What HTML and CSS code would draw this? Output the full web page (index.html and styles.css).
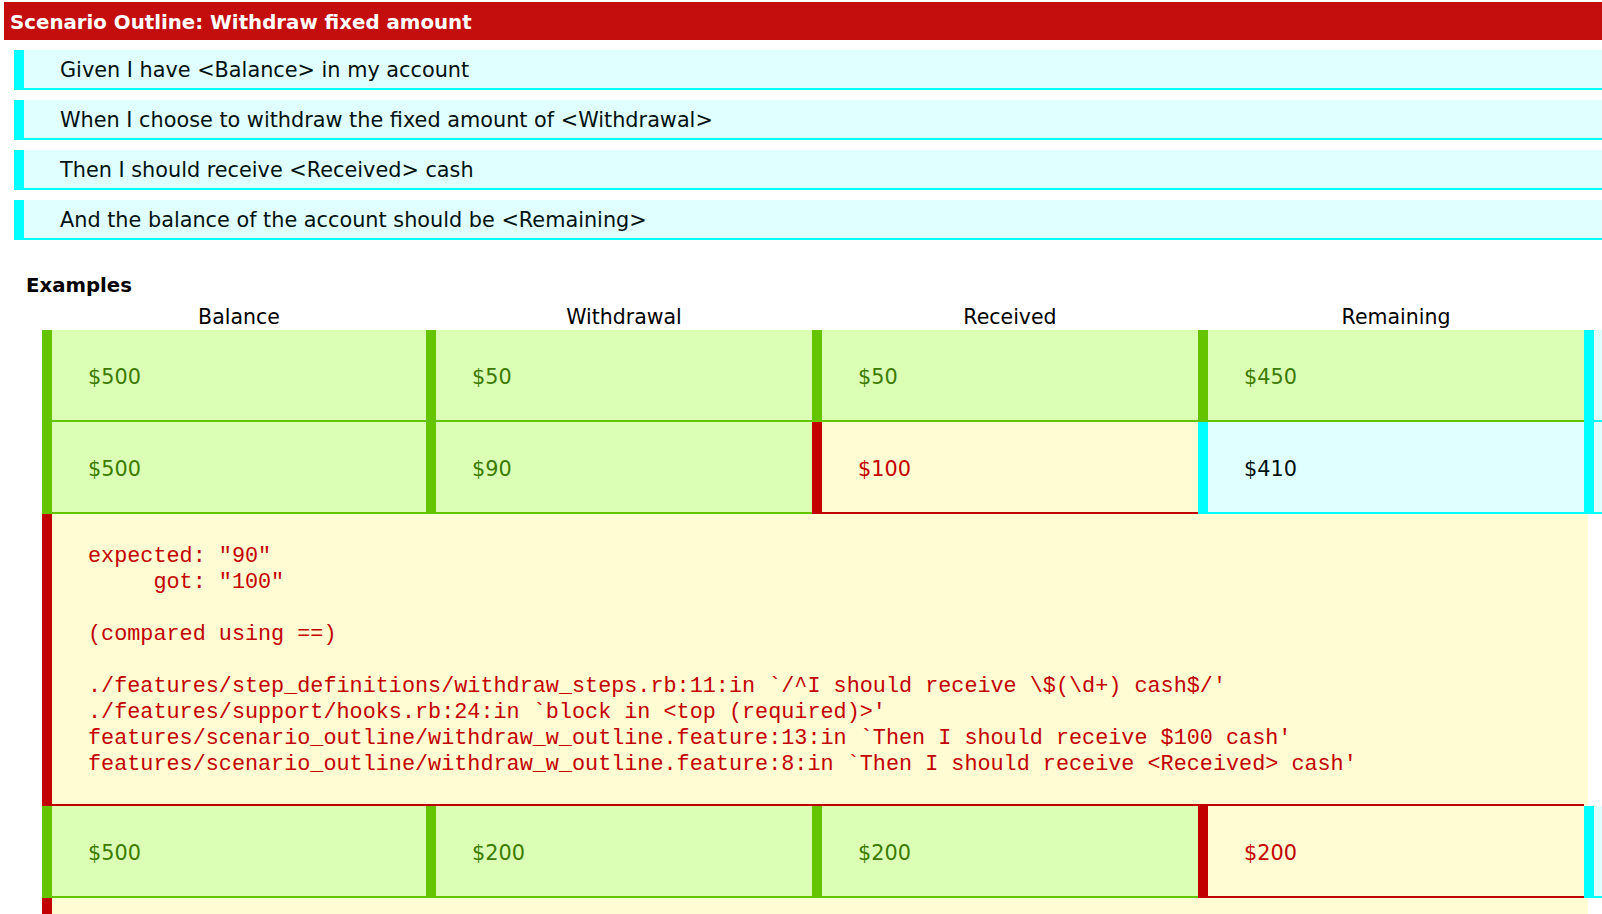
FILE: index.html
```html
<!DOCTYPE html>
<html>
<head>
<meta charset="utf-8">
<title>Scenario Outline: Withdraw fixed amount</title>
<link rel="stylesheet" href="styles.css">
</head>
<body>
<div class="scenario">
  <h3 class="scenario-title">Scenario Outline: Withdraw fixed amount</h3>
  <ol class="steps">
    <li class="step skipped">Given I have &lt;Balance&gt; in my account</li>
    <li class="step skipped">When I choose to withdraw the fixed amount of &lt;Withdrawal&gt;</li>
    <li class="step skipped">Then I should receive &lt;Received&gt; cash</li>
    <li class="step skipped">And the balance of the account should be &lt;Remaining&gt;</li>
  </ol>
  <div class="examples">
    <h4 class="examples-title">Examples</h4>
    <div class="table">
      <div class="th">Balance</div>
      <div class="th">Withdrawal</div>
      <div class="th">Received</div>
      <div class="th">Remaining</div>
      <div class="th"></div>

      <div class="cell passed">$500</div>
      <div class="cell passed">$50</div>
      <div class="cell passed">$50</div>
      <div class="cell passed">$450</div>
      <div class="cell skipped"></div>

      <div class="cell passed">$500</div>
      <div class="cell passed">$90</div>
      <div class="cell failed">$100</div>
      <div class="cell skipped">$410</div>
      <div class="cell skipped"></div>

      <div class="error failed"><pre class="error-text">expected: "90"
     got: "100"

(compared using ==)

./features/step_definitions/withdraw_steps.rb:11:in `/^I should receive \$(\d+) cash$/'
./features/support/hooks.rb:24:in `block in &lt;top (required)&gt;'
features/scenario_outline/withdraw_w_outline.feature:13:in `Then I should receive $100 cash'
features/scenario_outline/withdraw_w_outline.feature:8:in `Then I should receive &lt;Received&gt; cash'</pre></div>
      <div class="error-gap"></div>

      <div class="cell passed">$500</div>
      <div class="cell passed">$200</div>
      <div class="cell passed">$200</div>
      <div class="cell failed">$200</div>
      <div class="cell skipped"></div>

      <div class="error failed error-next"></div>
      <div class="error-gap"></div>
    </div>
  </div>
</div>
</body>
</html>
```

FILE: styles.css
```css
*, *::before, *::after {
  box-sizing: border-box;
}

html {
  overflow: hidden;
}

body {
  margin: 0;
  background: #ffffff;
  font-family: "DejaVu Sans", "Noto Sans", sans-serif;
  color: #001111;
}

.scenario {
  padding-top: 2px;
}

.scenario-title {
  margin: 0 0 0 4px;
  height: 38px;
  padding: 2px 0 0 6px;
  display: flex;
  align-items: center;
  background: #c40d0d;
  color: #ffffff;
  font-size: 19.8px;
  font-weight: bold;
}

.steps {
  list-style: none;
  margin: 10px 0 0 14px;
  padding: 0;
  display: flex;
  flex-direction: column;
  gap: 10px;
}

.step {
  height: 40px;
  display: flex;
  align-items: center;
  padding: 2px 0 0 36px;
  font-size: 20.8px;
}

.skipped {
  background: #e0ffff;
  border-left: 10px solid #00ffff;
  border-bottom: 2px solid #00ffff;
  color: #001111;
}

.passed {
  background: #dbffb4;
  border-left: 10px solid #65c400;
  border-bottom: 2px solid #65c400;
  color: #3c7b00;
}

.failed {
  background: #fffbd3;
  border-left: 10px solid #c20000;
  border-bottom: 2px solid #c20000;
  color: #c20000;
}

.examples {
  padding-top: 34px;
}

.examples-title {
  margin: 0 0 0 26px;
  font-size: 19.7px;
  line-height: 24px;
  font-weight: bold;
  color: #000000;
}

.table {
  margin: 4px 0 0 42px;
  display: grid;
  grid-template-columns: 384px 386px 386px 386px 18px;
}

.th {
  height: 28px;
  padding-top: 2px;
  border-left: 10px solid transparent;
  display: flex;
  align-items: center;
  justify-content: center;
  font-size: 20.5px;
  color: #000000;
}

.cell {
  height: 92px;
  display: flex;
  align-items: center;
  padding: 4px 0 0 36px;
  font-size: 20.8px;
}

.cell:empty {
  padding: 0;
}

.error {
  grid-column: 1 / 5;
  padding: 30px 0 26px 36px;
}

.error-gap {
  background: linear-gradient(to right, #fffbd3 4px, #ffffff 4px);
}

.error-text {
  margin: 0;
  font-family: "Liberation Mono", "DejaVu Sans Mono", monospace;
  font-size: 21.8px;
  line-height: 26px;
  color: #c20000;
}

.error-next {
  height: 120px;
  padding: 0;
  border-bottom: none;
}
```
